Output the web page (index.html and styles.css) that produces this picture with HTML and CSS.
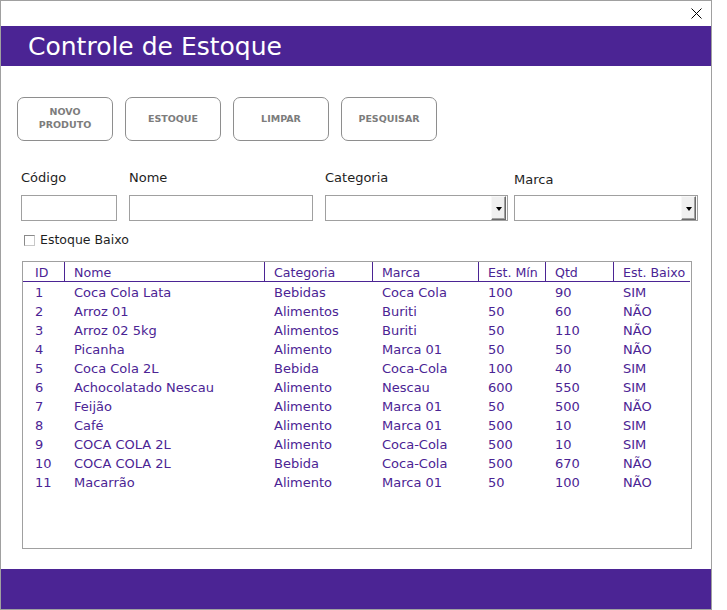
FILE: index.html
```html
<!DOCTYPE html>
<html lang="pt">
<head>
<meta charset="utf-8">
<title>Controle de Estoque</title>
<link rel="stylesheet" href="styles.css">
</head>
<body>
<div class="window">
  <div class="titlebar">
    <svg class="close" width="11" height="11" viewBox="0 0 11 11"><path d="M0.5 0.5 L10.5 10.5 M10.5 0.5 L0.5 10.5" stroke="#000" stroke-width="1" fill="none"/></svg>
  </div>
  <div class="header"><h1 class="title">Controle de Estoque</h1></div>
  <div class="content">
    <div class="buttons">
      <button class="btn">NOVO<br>PRODUTO</button>
      <button class="btn">ESTOQUE</button>
      <button class="btn">LIMPAR</button>
      <button class="btn">PESQUISAR</button>
    </div>
    <div class="fields">
      <div class="field f-codigo">
        <div class="label">Código</div>
        <div class="input"></div>
      </div>
      <div class="field f-nome">
        <div class="label">Nome</div>
        <div class="input"></div>
      </div>
      <div class="field f-cat">
        <div class="label">Categoria</div>
        <div class="input select"><span class="drop"><span class="arrow"></span></span></div>
      </div>
      <div class="field f-marca">
        <div class="label label-low">Marca</div>
        <div class="input select"><span class="drop"><span class="arrow"></span></span></div>
      </div>
    </div>
    <div class="check"><span class="box"></span><span>Estoque Baixo</span></div>
    <div class="listbox">
      <div class="row head">
        <div class="c c-id">ID</div><div class="c">Nome</div><div class="c">Categoria</div><div class="c">Marca</div><div class="c">Est. Mín</div><div class="c">Qtd</div><div class="c last">Est. Baixo</div>
      </div>
      <div class="row"><div class="c c-id">1</div><div class="c">Coca Cola Lata</div><div class="c">Bebidas</div><div class="c">Coca Cola</div><div class="c">100</div><div class="c">90</div><div class="c">SIM</div></div>
      <div class="row"><div class="c c-id">2</div><div class="c">Arroz 01</div><div class="c">Alimentos</div><div class="c">Buriti</div><div class="c">50</div><div class="c">60</div><div class="c">NÃO</div></div>
      <div class="row"><div class="c c-id">3</div><div class="c">Arroz 02 5kg</div><div class="c">Alimentos</div><div class="c">Buriti</div><div class="c">50</div><div class="c">110</div><div class="c">NÃO</div></div>
      <div class="row"><div class="c c-id">4</div><div class="c">Picanha</div><div class="c">Alimento</div><div class="c">Marca 01</div><div class="c">50</div><div class="c">50</div><div class="c">NÃO</div></div>
      <div class="row"><div class="c c-id">5</div><div class="c">Coca Cola 2L</div><div class="c">Bebida</div><div class="c">Coca-Cola</div><div class="c">100</div><div class="c">40</div><div class="c">SIM</div></div>
      <div class="row"><div class="c c-id">6</div><div class="c">Achocolatado Nescau</div><div class="c">Alimento</div><div class="c">Nescau</div><div class="c">600</div><div class="c">550</div><div class="c">SIM</div></div>
      <div class="row"><div class="c c-id">7</div><div class="c">Feijão</div><div class="c">Alimento</div><div class="c">Marca 01</div><div class="c">50</div><div class="c">500</div><div class="c">NÃO</div></div>
      <div class="row"><div class="c c-id">8</div><div class="c">Café</div><div class="c">Alimento</div><div class="c">Marca 01</div><div class="c">500</div><div class="c">10</div><div class="c">SIM</div></div>
      <div class="row"><div class="c c-id">9</div><div class="c">COCA COLA 2L</div><div class="c">Alimento</div><div class="c">Coca-Cola</div><div class="c">500</div><div class="c">10</div><div class="c">SIM</div></div>
      <div class="row"><div class="c c-id">10</div><div class="c">COCA COLA 2L</div><div class="c">Bebida</div><div class="c">Coca-Cola</div><div class="c">500</div><div class="c">670</div><div class="c">NÃO</div></div>
      <div class="row"><div class="c c-id">11</div><div class="c">Macarrão</div><div class="c">Alimento</div><div class="c">Marca 01</div><div class="c">50</div><div class="c">100</div><div class="c">NÃO</div></div>
    </div>
  </div>
  <div class="footer"></div>
</div>
</body>
</html>
```
FILE: styles.css
```css
html, body {
  margin: 0;
  padding: 0;
  background: #ffffff;
}
body {
  font-family: "DejaVu Sans", "Liberation Sans", sans-serif;
}
.window {
  width: 712px;
  height: 610px;
  box-sizing: border-box;
  border: 1px solid #a0a0a0;
  display: flex;
  flex-direction: column;
  background: #ffffff;
}
.titlebar {
  height: 25px;
  display: flex;
  justify-content: flex-end;
  align-items: flex-start;
}
.close {
  margin-top: 7px;
  margin-right: 9px;
}
.header {
  height: 40px;
  background: #4b2494;
  display: flex;
  align-items: center;
}
.title {
  margin: 0;
  padding-left: 27px;
  color: #ffffff;
  font-weight: normal;
  font-size: 25px;
  line-height: 40px;
  padding-top: 1px;
  letter-spacing: 0;
}
.content {
  flex: 1;
  padding-top: 31px;
  box-sizing: border-box;
}
.buttons {
  display: flex;
  gap: 12px;
  margin-left: 16px;
}
.btn {
  width: 96px;
  height: 44px;
  box-sizing: border-box;
  border: 1px solid #8e8e8e;
  border-radius: 7px;
  background: #ffffff;
  color: #7c7c7c;
  font-family: "DejaVu Sans", "Liberation Sans", sans-serif;
  font-weight: bold;
  font-size: 9.5px;
  line-height: 13px;
  padding: 0 0 2px 0;
  text-align: center;
}
.fields {
  display: flex;
  margin-top: 29px;
  margin-left: 20px;
}
.field {
  display: flex;
  flex-direction: column;
}
.f-codigo { width: 96px; margin-right: 12px; }
.f-nome { width: 184px; margin-right: 12px; }
.f-cat { width: 183px; margin-right: 6px; }
.f-marca { width: 184px; }
.label {
  font-size: 13px;
  line-height: 16px;
  height: 16px;
  color: #1e1e1e;
  margin-bottom: 9px;
}
.label-low {
  padding-top: 2px;
  height: 14px;
}
.input {
  height: 26px;
  box-sizing: border-box;
  border: 1px solid #a0a0a0;
  background: #ffffff;
}
.select {
  display: flex;
  justify-content: flex-end;
  padding: 0 1px 0 0;
}
.drop {
  width: 15px;
  height: 24px;
  box-sizing: border-box;
  background: #f0f0f0;
  border-top: 1px solid #f8f8f8;
  border-left: 1px solid #f8f8f8;
  border-right: 1px solid #6a6a6a;
  border-bottom: 1px solid #6a6a6a;
  box-shadow: inset -1px -1px 0 #a0a0a0;
  display: flex;
  align-items: center;
  justify-content: center;
}
.arrow {
  width: 0;
  height: 0;
  border-left: 3px solid transparent;
  border-right: 3px solid transparent;
  border-top: 4px solid #000000;
  margin-top: 2px;
}
.check {
  display: flex;
  align-items: center;
  gap: 5px;
  margin-top: 12px;
  margin-left: 23px;
  font-size: 12.5px;
  line-height: 14px;
  color: #1e1e1e;
}
.box {
  width: 11px;
  height: 11px;
  box-sizing: border-box;
  border: 1px solid #8a8a8a;
  border-right-color: #c8c8c8;
  border-bottom-color: #c8c8c8;
  background: #ffffff;
}
.listbox {
  margin-top: 14px;
  margin-left: 21px;
  width: 670px;
  height: 288px;
  box-sizing: border-box;
  border: 1px solid #a0a0a0;
  color: #4b2494;
  font-size: 13px;
}
.row {
  display: grid;
  grid-template-columns: 42px 200px 108px 106px 67px 68px 76px;
  height: 19px;
  line-height: 19px;
}
.row .c {
  padding-left: 9px;
  white-space: nowrap;
  overflow: hidden;
}
.row .c-id {
  padding-left: 12px;
}
.row.head {
  width: 667px;
  height: 19px;
  border-bottom: 1px solid #4b2494;
  margin-bottom: 1px;
  font-size: 12.6px;
}
.row.head .c {
  border-right: 1px solid #4b2494;
  box-sizing: border-box;
  padding-top: 3px;
  line-height: 16px;
}
.row.head .c.last {
  border-right: none;
}
.footer {
  height: 40px;
  background: #4b2494;
}
```
